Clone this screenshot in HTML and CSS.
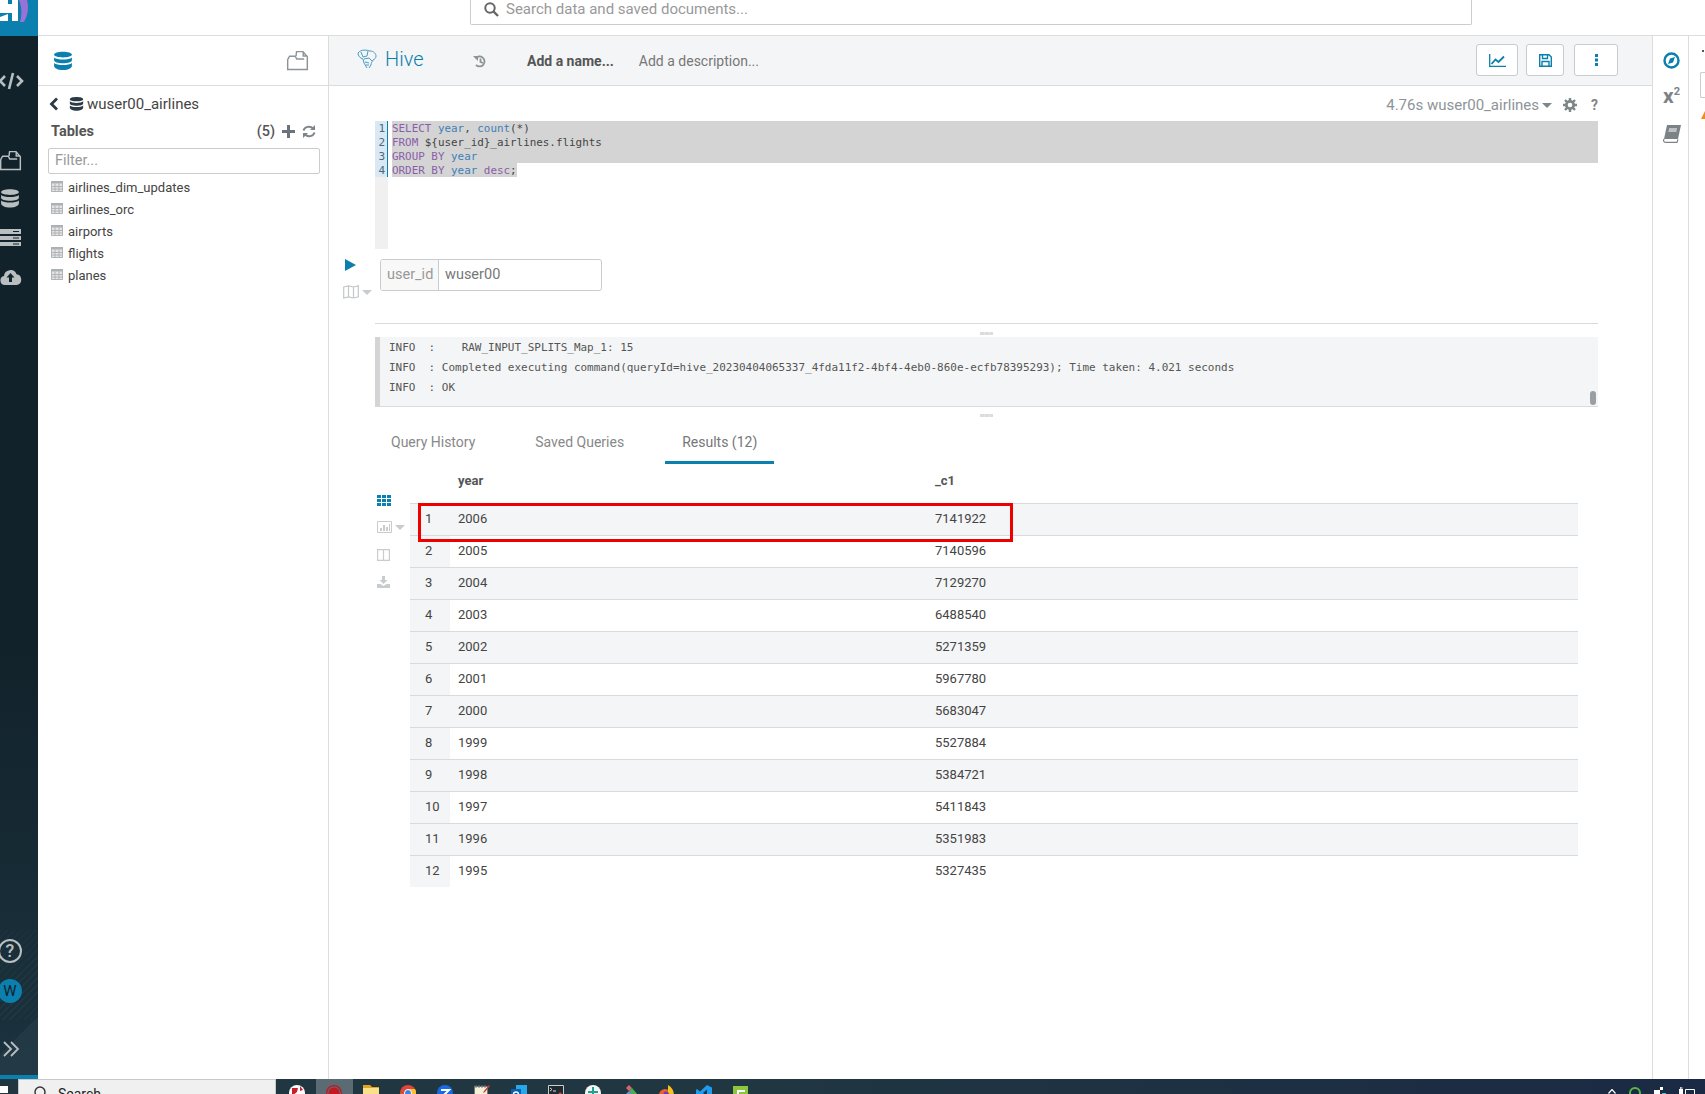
FILE: index.html
```html
<!DOCTYPE html>
<html lang="en">
<head>
<meta charset="utf-8">
<title>Hive</title>
<link rel="stylesheet" href="styles.css">
</head>
<body>
<svg class="defs" width="0" height="0" aria-hidden="true">
  <symbol id="db" viewBox="0 0 18 18">
    <path fill="currentColor" d="M1 3.200C1 1.600 4.600.6 9 .6s8 1 8 2.600-3.600 2.600-8 2.600-8-1-8-2.600zM1 5.800c1.400 1.300 4.600 1.900 8 1.900s6.600-.6 8-1.900v2.500C17 9.900 13.400 11 9 11S1 9.900 1 8.300zM1 10.800c1.400 1.300 4.600 1.900 8 1.900s6.600-.6 8-1.900v2.600c0 1.700-3.600 3.800-8 3.800s-8-2.100-8-3.800z"/>
  </symbol>
  <symbol id="folder" viewBox="0 0 24 22">
    <path fill="none" stroke="currentColor" stroke-width="1.500" d="M1.700 10v10.500h20.600V7l-4.500-5.300H11l-.5 4.500M1.700 10l2-3.500h6l1.500 3H19M18 1.700v4.500h4.300"/>
  </symbol>
  <symbol id="tbl" viewBox="0 0 12 11">
    <path fill="#e6e4e2" d="M0 0h12v11H0z"/>
    <path fill="#aeb2b5" d="M0 0h12v2.500H0z"/>
    <path fill="none" stroke="#aab0b4" stroke-width=".9" d="M.5.500h11v10H.500zM4 2.500V11M8 2.500V11M0 5.500h12M0 8h12"/>
  </symbol>
</svg>
<div class="screen">
  <div class="desktop">
    <nav class="nav">
      <div class="logo">
        <svg width="38" height="23" viewBox="0 0 38 23"><path fill="#fff" d="M0 0h8v4h4V0h6v21h-6v-8H0zM0 17l8-3v7H0z"/><path fill="#9872d6" d="M19 0h8c2 7 1 15-3 22h-4c2-6 2-15-1-22z"/></svg>
      </div>
      <svg class="ni ni-code" width="26" height="20" viewBox="0 0 26 20"><path fill="none" stroke="#b9bec1" stroke-width="2.600" d="M7 5 2 10l5 5M19 5l5 5-5 5M15 2l-4 16"/></svg>
      <svg class="ni ni-folder" width="23" height="21"><use href="#folder"/></svg>
      <svg class="ni ni-db" width="20" height="21"><use href="#db"/></svg>
      <svg class="ni ni-server" width="22" height="18" viewBox="0 0 22 18"><path fill="#b9bec1" d="M0 0h21v5H0zM0 7h21v4H0zM0 13h21v4H0z"/><path fill="#13242d" d="M13 2h6v1h-6zM13 8.500h6v1h-6zM13 14.500h6v1h-6z"/></svg>
      <svg class="ni ni-cloud" width="22" height="16" viewBox="0 0 22 16"><path fill="#b9bec1" d="M5 16A4.500 4.500 0 0 1 4 7.100 6.500 6.500 0 0 1 16.500 5.200 5.500 5.500 0 0 1 17 16z"/><path fill="#13242d" d="m10.500 4 4 4.500H12V13H9V8.500H6.500z"/></svg>
      <div class="nav-fill"></div>
      <div class="help">?</div>
      <div class="avatar">W</div>
      <svg class="ni ni-more" width="18" height="16" viewBox="0 0 18 16"><path fill="none" stroke="#b9bec1" stroke-width="1.800" d="m2 1 7 7-7 7M9 1l7 7-7 7"/></svg>
      <div class="nav-strip"></div>
    </nav>
    <div class="content">
      <header class="topbar">
        <div class="search">
          <svg width="15" height="15" viewBox="0 0 15 15"><circle cx="6" cy="6" r="4.700" fill="none" stroke="#666" stroke-width="2"/><path stroke="#666" stroke-width="2.400" d="m9.500 9.500 4.500 4.500"/></svg>
          <span>Search data and saved documents...</span>
        </div>
      </header>
      <div class="panels">
        <aside class="left">
          <div class="left-head">
            <svg class="c-blue" width="20" height="20"><use href="#db"/></svg>
            <svg class="c-grey" width="23" height="21"><use href="#folder"/></svg>
          </div>
          <div class="crumb">
            <svg width="9" height="14" viewBox="0 0 9 14"><path fill="none" stroke="#2b3a44" stroke-width="2.800" d="M8 1.500 2.500 7 8 12.500"/></svg>
            <svg class="c-dark" width="15" height="16"><use href="#db"/></svg>
            <span>wuser00_airlines</span>
          </div>
          <div class="tables-head">
            <strong>Tables</strong>
            <span class="count">(5)</span>
            <svg width="13" height="13" viewBox="0 0 13 13"><path fill="#6c7479" d="M5 0h3v5h5v3H8v5H5V8H0V5h5z"/></svg>
            <svg width="14" height="13" viewBox="0 0 14 13"><path fill="none" stroke="#7d8589" stroke-width="2" d="M1.500 5.500A5.500 5 0 0 1 11 3.500M12.500 7.500A5.500 5 0 0 1 3 9.500"/><path fill="#7d8589" d="M13 0v5H8zM1 13V8h5z"/></svg>
          </div>
          <div class="filter">Filter...</div>
          <ul class="tables">
            <li><svg width="12" height="11"><use href="#tbl"/></svg>airlines_dim_updates</li>
            <li><svg width="12" height="11"><use href="#tbl"/></svg>airlines_orc</li>
            <li><svg width="12" height="11"><use href="#tbl"/></svg>airports</li>
            <li><svg width="12" height="11"><use href="#tbl"/></svg>flights</li>
            <li><svg width="12" height="11"><use href="#tbl"/></svg>planes</li>
          </ul>
        </aside>
        <main class="main">
          <div class="doc-head">
            <svg class="hive-icon" width="21" height="21" viewBox="0 0 21 21"><g fill="none" stroke="#4a9cc0" stroke-width="1"><path d="M2 4c3-4 9-3 12-2 4 0 6 3 6 5s-1 3-3 4c-1 2-2 3-2 5l-2 3M2 4c0 3 2 5 5 6l1 4 3 5"/><path d="M5 3l2 5 4-1 1-5M8 10l5-1 3 3M9 13l4 1M10 16h3"/></g></svg>
            <span class="hive-name">Hive</span>
            <svg class="history" width="14" height="13" viewBox="0 0 14 13"><path fill="none" stroke="#8d9498" stroke-width="1.800" d="M2.500 3.500A5 5 0 1 1 3 10M7.500 3.500v3.500l2.500 1"/><path fill="#8d9498" d="M0 1h5v5z"/></svg>
            <span class="doc-name">Add a name...</span>
            <span class="doc-desc">Add a description...</span>
            <div class="doc-actions">
              <button class="btn b-chart" type="button"><svg width="17" height="13" viewBox="0 0 17 13"><path fill="none" stroke="#0b7fad" stroke-width="1.300" d="M.7 0v12.300H17"/><path fill="none" stroke="#0b7fad" stroke-width="1.800" d="m2.500 10 4-4.500 3 2.500L15 2.500"/></svg></button>
              <button class="btn b-save" type="button"><svg width="13" height="13" viewBox="0 0 13 13"><path fill="none" stroke="#0b7fad" stroke-width="1.400" d="M.7.700h9.300l2.300 2.300v9.300H.7zM3.500 1v3.500h5V1M3 12V7.500h7V12"/></svg></button>
              <button class="btn b-more" type="button"><svg width="3" height="12" viewBox="0 0 3 12"><path fill="#0b7fad" d="M0 0h3v3H0zM0 4.500h3v3H0zM0 9h3v3H0z"/></svg></button>
            </div>
          </div>
          <div class="status">
            <span>4.76s wuser00_airlines</span><i class="caret"></i>
            <svg class="gear" width="14" height="14" viewBox="0 0 14 14"><circle cx="7" cy="7" r="3.700" fill="none" stroke="#7f868a" stroke-width="2.800"/><path stroke="#7f868a" stroke-width="2.400" d="M7 0v3M7 11v3M0 7h3M11 7h3M2 2l2 2M10 10l2 2M12 2l-2 2M4 10l-2 2"/></svg>
            <b class="q">?</b>
          </div>
          <div class="editor">
            <div class="gutter">
              <div class="nums"><div>1</div><div>2</div><div>3</div><div>4</div></div>
            </div>
            <div class="code">
              <div class="ln full"><span class="k">SELECT</span> <span class="f">year</span>, <span class="f">count</span>(*)</div>
              <div class="ln full"><span class="k">FROM</span> ${user_id}_airlines.flights</div>
              <div class="ln full"><span class="k">GROUP BY</span> <span class="f">year</span></div>
              <div class="ln"><span class="sel"><span class="k">ORDER BY</span> <span class="f">year</span> <span class="k">desc</span>;</span></div>
            </div>
          </div>
          <div class="vars">
            <div class="exec">
              <svg width="11" height="12" viewBox="0 0 11 12"><path fill="#0b7fad" d="M0 0l11 6-11 6z"/></svg>
              <div class="map">
                <svg width="16" height="14" viewBox="0 0 16 14"><path fill="none" stroke="#c3c7ca" stroke-width="1.200" d="M.7 2 5.500.8l5 1.200 4.800-1.200v11L10.500 13l-5-1.200L.7 13zM5.500 1v11M10.500 2v11"/></svg>
                <i class="caret pale"></i>
              </div>
            </div>
            <div class="var-input"><span class="var-label">user_id</span><span class="var-value">wuser00</span></div>
          </div>
          <div class="grip"><span></span></div>
          <div class="log">
            <pre>INFO  :    RAW_INPUT_SPLITS_Map_1: 15
INFO  : Completed executing command(queryId=hive_20230404065337_4fda11f2-4bf4-4eb0-860e-ecfb78395293); Time taken: 4.021 seconds
INFO  : OK</pre>
            <i class="scroll"></i>
          </div>
          <div class="grip g2"><span></span></div>
          <div class="tabs">
            <span class="tab">Query History</span>
            <span class="tab">Saved Queries</span>
            <span class="tab active">Results (12)</span>
          </div>
          <div class="results">
            <div class="tools">
              <svg width="14" height="11" viewBox="0 0 14 11"><path fill="#0b7fad" d="M0 0h4v3H0zM5 0h4v3H5zM10 0h4v3h-4zM0 4h4v3H0zM5 4h4v3H5zM10 4h4v3h-4zM0 8h4v3H0zM5 8h4v3H5zM10 8h4v3h-4z"/></svg>
              <div class="tool-chart">
                <svg width="15" height="12" viewBox="0 0 15 12"><path fill="none" stroke="#c8ccce" d="M.5.500h14v11H.5z"/><path fill="#c8ccce" d="M3 7h2v3H3zM6 4h2v6H6zM9 6h2v4H9zM12 3h1v7h-1z"/></svg>
                <i class="caret pale"></i>
              </div>
              <svg width="13" height="12" viewBox="0 0 13 12"><path fill="none" stroke="#c8ccce" stroke-width="1.200" d="M.6.600h11.800v10.800H.6zM6.500.6v10.800"/></svg>
              <svg width="13" height="12" viewBox="0 0 13 12"><path fill="#c8ccce" d="M5 0h3v4h2.500l-4 4-4-4H5zM0 8h3.500l3 2 3-2H13v4H0z"/></svg>
            </div>
            <table class="grid">
              <colgroup><col class="c-num"><col class="c-year"><col></colgroup>
              <thead><tr><th></th><th>year</th><th>_c1</th></tr></thead>
              <tbody>
                <tr><td class="redcell">1<div class="redbox"></div></td><td>2006</td><td>7141922</td></tr>
                <tr><td>2</td><td>2005</td><td>7140596</td></tr>
                <tr><td>3</td><td>2004</td><td>7129270</td></tr>
                <tr><td>4</td><td>2003</td><td>6488540</td></tr>
                <tr><td>5</td><td>2002</td><td>5271359</td></tr>
                <tr><td>6</td><td>2001</td><td>5967780</td></tr>
                <tr><td>7</td><td>2000</td><td>5683047</td></tr>
                <tr><td>8</td><td>1999</td><td>5527884</td></tr>
                <tr><td>9</td><td>1998</td><td>5384721</td></tr>
                <tr><td>10</td><td>1997</td><td>5411843</td></tr>
                <tr><td>11</td><td>1996</td><td>5351983</td></tr>
                <tr><td>12</td><td>1995</td><td>5327435</td></tr>
              </tbody>
            </table>
          </div>
        </main>
        <aside class="rail">
          <svg width="17" height="17" viewBox="0 0 17 17"><circle cx="8.500" cy="8.500" r="7" fill="none" stroke="#0b7fad" stroke-width="2.400"/><path fill="#0b7fad" d="m12 5-2 5.500L5 12l2-5.500z"/></svg>
          <div class="sup">x<sup>2</sup></div>
          <svg width="18" height="18" viewBox="0 0 18 18"><path fill="#7c8387" d="M4 0h14l-3 14H1z"/><path fill="none" stroke="#7c8387" stroke-width="1.200" d="M1 14c-1 2 0 3.400 2 3.400h11l1-3"/><path stroke="#fff" d="M6 4h8M5.500 6h8"/></svg>
        </aside>
        <aside class="far">
          <i class="far-dash"></i>
          <i class="far-input"></i>
          <i class="far-warn"></i>
        </aside>
      </div>
    </div>
  </div>
  <footer class="taskbar">
    <i class="start"></i>
    <div class="ts"><svg width="14" height="14" viewBox="0 0 14 14"><circle cx="6" cy="6" r="5" fill="none" stroke="#333" stroke-width="1.400"/></svg><span>Search</span></div>
    <div class="apps">
      <span class="app"><svg width="16" height="16" viewBox="0 0 16 16"><circle cx="8" cy="8" r="8" fill="#fff"/><path fill="#c8202a" d="M3 3h6l-1 4-5 4zM11 1l3 4-3 1z"/></svg></span>
      <span class="app on"><svg width="16" height="16" viewBox="0 0 16 16"><circle cx="8" cy="8" r="7.400" fill="none" stroke="#c4171f" stroke-width="1.200"/><circle cx="8" cy="8" r="5.500" fill="#c4171f"/></svg></span>
      <span class="app"><svg width="16" height="16" viewBox="0 0 16 16"><path fill="#e0a526" d="M0 0h7l2 2h7v14H0z"/><path fill="#fbe08a" d="M0 3h16v13H0z"/></svg></span>
      <span class="app"><svg width="16" height="16" viewBox="0 0 16 16"><circle cx="8" cy="8" r="8" fill="#e0453a"/><path fill="#34a853" d="M0 8a8 8 0 0 0 8 8l3-5H5z"/><path fill="#fbc02d" d="M8 16A8 8 0 0 0 15 4H8l3 7z"/><circle cx="8" cy="8" r="3.500" fill="#3d7fe0" stroke="#fff"/></svg></span>
      <span class="app"><svg width="16" height="16" viewBox="0 0 16 16"><circle cx="8" cy="8" r="8" fill="#1769e8"/><path fill="none" stroke="#fff" stroke-width="2" d="M4 5h8L5 12h7"/></svg></span>
      <span class="app"><svg width="16" height="16" viewBox="0 0 16 16"><path fill="#f4f1d8" stroke="#777" d="M.5 1.500h13v14H.5z"/><path stroke="#777" d="M2 0v3M5 0v3M8 0v3M11 0v3"/><path fill="#d2352a" d="m15 0 1 1-5 6-2 1 1-2z"/></svg></span>
      <span class="app"><svg width="16" height="16" viewBox="0 0 16 16"><path fill="#28a8ea" d="M5 0h11v12H5z"/><path fill="#0a5fb0" d="M0 4h10v12H0z"/><circle cx="5" cy="9.500" r="2.500" fill="none" stroke="#fff" stroke-width="1.400"/></svg></span>
      <span class="app"><svg width="16" height="16" viewBox="0 0 16 16"><path fill="#1e2a30" stroke="#ccc" d="M.5.500h15v15H.5z"/><path stroke="#ddd" d="m2 3 2 1.500L2 6M5 6h3"/><path fill="#e0453a" d="m7 13 5-6 2 2v5H7z"/><path fill="#3d7fe0" d="m1 14 5-5 2 2-3 3z"/></svg></span>
      <span class="app"><svg width="16" height="16" viewBox="0 0 16 16"><circle cx="8" cy="8" r="8" fill="#f2f5f4"/><path fill="#1aa58c" d="M7 2h2v12H7zM3 6h10v2H3zM4 10h8v1H4z"/></svg></span>
      <span class="app"><svg width="16" height="16" viewBox="0 0 16 16"><path fill="#e0606e" d="m7 0 3 3-3 3-3-3z"/><path fill="#4caf50" d="m10 3 6 7-3 3-6-7z"/><path fill="#6d90d8" d="M7 6 0 13l3 3 7-7z"/></svg></span>
      <span class="app"><svg width="16" height="16" viewBox="0 0 16 16"><circle cx="6" cy="10" r="6" fill="#e8602c"/><path fill="#f6c21c" d="M9 0c5 3 7 8 5 12l-5 3c3-4 2-6 0-8z"/><circle cx="7" cy="9" r="2.500" fill="#6a3fb5"/></svg></span>
      <span class="app"><svg width="16" height="16" viewBox="0 0 16 16"><path fill="#1f9cf0" d="M11 0l5 2.500v11L11 16 4 9.500 1 12 0 11V5l1-1 3 2.500zM11 4.500 7 8l4 3.500z"/></svg></span>
      <span class="app"><svg width="16" height="16" viewBox="0 0 16 16"><path fill="#8cc63f" d="M0 1h15v15H0z"/><path fill="#fff" d="M4 5h8v2H6v5H4z"/></svg></span>
    </div>
    <div class="tray">
      <svg width="8" height="5" viewBox="0 0 8 5"><path fill="none" stroke="#fff" stroke-width="1.200" d="m.5 4.500 3.500-4 3.500 4"/></svg>
      <svg width="12" height="12" viewBox="0 0 12 12"><circle cx="6" cy="6" r="5" fill="none" stroke="#58b947" stroke-width="2"/></svg>
      <svg width="12" height="12" viewBox="0 0 12 12"><path fill="#fff" d="M0 3h6v9H0zM6 0h3v3H6z"/><path fill="#3cc" d="M8 6h4v6H8z"/></svg>
      <svg width="16" height="8" viewBox="0 0 16 8"><path fill="#fff" d="M0 2h4v6H0zM1 0h.8v2H1zM2.500 0h.8v2h-.8z"/><path fill="none" stroke="#fff" d="M6.500 2.500h9v6h-9z"/></svg>
    </div>
  </footer>
</div>
</body>
</html>
```
FILE: styles.css
```css
* { box-sizing: border-box; }
html, body { margin: 0; padding: 0; height: 100%; overflow: hidden; }
body { font-family: Roboto, "Liberation Sans", sans-serif; color: #444; background: #fff; }
.defs { position: absolute; }
svg { display: block; flex: none; }
.screen { width: 1705px; height: 1094px; display: flex; flex-direction: column; overflow: hidden; }
.desktop { flex: none; height: 1079px; display: flex; }

/* left navigation */
.nav { flex: none; width: 38px; height: 1079px; display: flex; flex-direction: column; color: #b9bec1; overflow: hidden;
  background:
    linear-gradient(135deg, transparent 0 calc(100% - 44px), rgba(255,255,255,.035) calc(100% - 44px)),
    repeating-linear-gradient(135deg, rgba(255,255,255,.035) 0 1px, transparent 1px 5px) 0 930px / 38px 90px no-repeat,
    linear-gradient(#12222b, #12222b 60%, #1b333f); }
.logo { flex: none; height: 36px; background: #0b7fad; }
.ni { align-self: flex-start; }
.ni-code { margin-top: 35px; margin-left: -2px; }
.ni-folder { margin-top: 59px; margin-left: -1px; }
.ni-db { margin-top: 17px; }
.ni-server { margin-top: 20px; }
.ni-cloud { margin-top: 22px; }
.nav-fill { flex: 1; }
.help { align-self: flex-start; margin-left: -2px; width: 24px; height: 24px; border: 2.500px solid #b9bec1; border-radius: 50%; font-size: 18px; line-height: 19px; text-align: center; font-weight: 500; }
.avatar { align-self: flex-start; margin-left: -2px; margin-top: 16px; width: 24px; height: 24px; border-radius: 50%; background: #0b7fad; color: #12222b; font-size: 15px; line-height: 24px; text-align: center; }
.ni-more { margin-top: 38px; margin-left: 2px; }
.nav-strip { flex: none; margin-top: 18px; height: 4px; background: #0b7fad; }

.content { flex: 1; min-width: 0; display: flex; flex-direction: column; }

/* top bar */
.topbar { flex: none; height: 36px; border-bottom: 1px solid #dcdcdc; padding-left: 432px; }
.search { width: 1002px; height: 25px; border: 1px solid #ccc; border-top: 0; display: flex; align-items: flex-start; padding: 1px 0 0 13px; gap: 7px; color: #999; font-size: 15px; line-height: 16px; border-radius: 0 0 2px 2px; }
.search svg { margin-top: 1px; }

.panels { flex: 1; display: flex; min-height: 0; }

/* left assist */
.left { flex: none; width: 291px; border-right: 1px solid #dcdcdc; }
.left-head { height: 50px; border-bottom: 1px solid #dcdcdc; display: flex; align-items: center; justify-content: space-between; padding: 0 19px 0 15px; }
.c-blue { color: #0b7fad; }
.c-grey { color: #8d9498; }
.c-dark { color: #2b3a44; }
.crumb { display: flex; align-items: center; height: 18px; margin-top: 9px; padding-left: 11px; font-size: 15px; color: #444; }
.crumb svg:first-child { margin-right: 11px; }
.crumb span { margin-left: 3px; }
.tables-head { display: flex; align-items: center; height: 18px; margin-top: 9px; padding: 0 12px 0 13px; font-size: 14.500px; color: #555; gap: 7px; }
.tables-head strong { flex: 1; font-weight: 700; }
.count { font-weight: 500; margin-right: 0; }
.filter { margin: 8px 0 0 10px; width: 272px; height: 26px; border: 1px solid #ccc; border-radius: 2px; padding-left: 6px; color: #999; font-size: 14.500px; line-height: 24px; }
.tables { list-style: none; margin: 2px 0 0; padding: 0 0 0 13px; font-size: 13px; color: #444; }
.tables li { height: 22px; display: flex; align-items: center; gap: 5px; }
.tables li svg { margin-top: -2px; }

/* main column */
.main { flex: none; width: 1323px; display: flex; flex-direction: column; }
.doc-head { flex: none; height: 50px; background: #f4f5f6; border-bottom: 1px solid #dcdcdc; display: flex; align-items: center; padding-left: 27px; }
.hive-icon { margin-top: -3px; }
.hive-name { margin-left: 8px; margin-top: -3px; font-size: 20px; color: #0b7fad; width: 70px; font-weight: 300; }
.history { margin: 2px 0 0 18px; }
.doc-name { margin-left: 40px; font-size: 14px; font-weight: 700; color: #555; }
.doc-desc { margin-left: 25px; font-size: 14px; color: #777; }
.doc-actions { margin-left: auto; margin-right: 34px; display: flex; gap: 8px; margin-top: -1px; }
.btn { height: 32px; background: #fff; border: 1px solid #c8ccce; border-radius: 3px; padding: 0; display: flex; align-items: center; justify-content: center; }
.b-chart { width: 42px; }
.b-save { width: 38px; }
.b-more { width: 44px; margin-left: 2px; }
.status { flex: none; height: 35px; display: flex; align-items: center; padding-right: 54px; justify-content: flex-end; font-size: 15px; color: #8d9498; padding-top: 3px; }
.caret { display: inline-block; width: 0; height: 0; border: 5px solid transparent; border-top: 5px solid #7f868a; border-bottom: 0; margin-left: 3px; }
.caret.pale { border-top-color: #c8ccce; }
.gear { margin-left: 11px; }
.q { margin-left: 14px; color: #7f868a; font-size: 14px; }

.editor { flex: none; height: 128px; margin-left: 46px; margin-right: 54px; display: flex; }
.gutter { flex: none; width: 13px; background: #f0f0f0; }
.nums { background: #d9e8f3; border-right: 1px solid #0b7fad; height: 56px; text-align: right; padding-right: 2px; }
.nums div { height: 14px; font: 11px/16px "DejaVu Sans Mono", monospace; color: #4a6a80; }
.code { flex: 1; padding-left: 4px; font: 10.900px/16px "DejaVu Sans Mono", monospace; color: #444; }
.ln { height: 14px; white-space: pre; }
.full { background: #d4d4d4; }
.sel { background: #d4d4d4; display: inline-block; height: 14px; }
.k { color: #8a5ea8; }
.f { color: #3f7fb5; }

.vars { flex: none; height: 75px; margin-right: 54px; display: flex; position: relative; }
.vars::after { content: ""; position: absolute; left: 46px; right: 0; bottom: 0; height: 1px; background: #d9d9d9; }
.exec { flex: none; width: 51px; padding: 10px 0 0 16px; display: flex; flex-direction: column; gap: 14px; }
.map { display: flex; align-items: center; margin-left: -2px; gap: 1px; width: 30px; }
.map .caret { margin-left: 2px; }
.var-input { margin-top: 10px; height: 32px; width: 222px; border: 1px solid #c8ccce; border-radius: 3px; display: flex; font-size: 14.500px; line-height: 30px; overflow: hidden; }
.var-label { flex: none; width: 58px; background: #f8f8f8; border-right: 1px solid #c8ccce; color: #999; padding-left: 6px; }
.var-value { padding-left: 6px; color: #777; }
.grip { flex: none; height: 13px; position: relative; margin-left: 46px; margin-right: 54px; }
.grip span { position: absolute; left: 605px; top: 8px; width: 13px; height: 3px; background: repeating-linear-gradient(90deg, #dcdcdc 0 4px, #e6e6e6 4px 5px); }
.g2 { height: 18px; }
.g2 span { top: 7px; }
.log { flex: none; height: 70px; margin-left: 46px; margin-right: 54px; background: #f4f5f6; border-left: 5px solid #d4d4d4; border-bottom: 1px solid #d9d9de; padding: 0 0 0 9px; position: relative; overflow: hidden; }
.log pre { margin: 1px 0 0; font: 10.970px/20px "DejaVu Sans Mono", monospace; color: #555; }
.scroll { position: absolute; right: 2px; top: 54px; width: 6px; height: 14px; border-radius: 3px; background: #9a9fa3; }

.tabs { flex: none; height: 38px; margin-left: 45px; display: flex; gap: 26px; font-size: 14px; color: #888; }
.tab { padding: 0 17px; line-height: 35px; }
.tab.active { border-bottom: 3px solid #0b7fad; color: #777; height: 39px; margin-left: -2px; }

.results { flex: 1; display: flex; margin-left: 46px; }
.tools { flex: none; width: 35px; padding: 32px 0 0 2px; display: flex; flex-direction: column; gap: 15px; }
.tool-chart { display: flex; align-items: center; margin-bottom: 1px; width: 33px; gap: 1px; }
.tool-chart .caret { margin-left: 2px; }
.grid { border-collapse: collapse; table-layout: fixed; width: 1168px; font-size: 13px; height: max-content; align-self: flex-start; color: #444; }
.c-num { width: 40px; }
.c-year { width: 485px; }
.grid th { height: 40px; text-align: left; padding: 0 0 5px 8px; font-weight: 700; font-size: 13px; color: #555; }
.grid td { height: 32px; padding: 0 0 2px 8px; border-top: 1px solid #d9dadc; }
.grid td:first-child { padding-left: 15px; background: #f4f5f6; }
.grid td:nth-child(3) { padding-left: 0; }
.grid th:nth-child(3) { padding-left: 0; }
.grid tbody tr:nth-child(odd) td { background: #f4f5f6; }
.grid tbody tr:last-child td { background: #fff; }
.grid tbody tr:last-child td:first-child { background: #f4f5f6; }
.redcell { position: relative; }
.redbox { position: absolute; left: 8px; top: -1px; width: 595px; height: 39px; border: 3px solid #ee0000; pointer-events: none; }

/* right rail */
.rail { flex: none; width: 37px; border-left: 1px solid #dcdcdc; border-right: 1px solid #dcdcdc; display: flex; flex-direction: column; align-items: center; padding: 16px 0 0 2px; }
.sup { margin-top: 16px; font-size: 21px; line-height: 22px; font-weight: 700; color: #7c8387; }
.sup sup { font-size: 11px; line-height: 0; vertical-align: 8px; }
.rail svg:last-child { margin-top: 18px; }
.far { flex: 1; position: relative; }
.far-dash { position: absolute; left: 13px; top: 14px; width: 2px; height: 2px; background: #555; }
.far-input { position: absolute; left: 11px; top: 36px; width: 10px; height: 26px; border: 1px solid #ccc; border-right: 0; border-radius: 2px 0 0 2px; }
.far-warn { position: absolute; left: 12px; top: 75px; width: 0; height: 0; border: 4px solid transparent; border-bottom: 8px solid #f38a1d; border-top: 0; }

/* taskbar */
.taskbar { flex: none; height: 15px; display: flex; overflow: hidden; background: linear-gradient(90deg, #203641, #203641 45%, #1b2a44); }
.start { flex: none; width: 8px; height: 7px; margin-top: 7px; background: #fff; }
.ts { flex: none; width: 258px; margin-left: 10px; background: #f0f0f0; border: 1px solid #c8c8c8; border-bottom: 0; display: flex; padding: 6px 0 0 15px; gap: 10px; font-size: 14px; line-height: 17px; color: #222; }
.apps { flex: none; display: flex; margin-left: 3px; }
.app { flex: none; width: 37px; padding: 6px 0 0 10px; }
.app.on { background: #5b6b73; }
.tray { margin-left: auto; display: flex; gap: 13px; padding: 8px 10px 0 0; }
.tray svg:first-child { margin-top: 2px; }
```
